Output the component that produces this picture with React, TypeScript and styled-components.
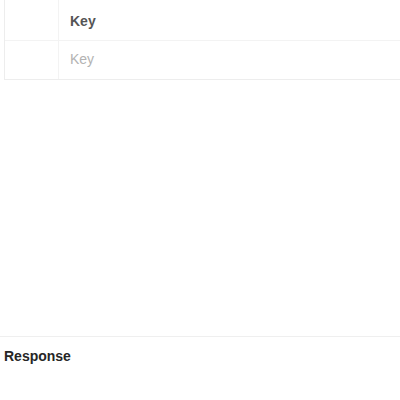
import React from "react";
import styled, { createGlobalStyle } from "styled-components";

const Global = createGlobalStyle`
  html, body { margin: 0; padding: 0; background: #fff; }
  body { font-family: "Liberation Sans", Arial, sans-serif; overflow: hidden; }
`;

const Page = styled.div`
  width: 400px;
  height: 400px;
  display: flex;
  flex-direction: column;
  overflow: hidden;
`;

const TableWrap = styled.div`
  padding-left: 4px;
  height: 336px;
  box-sizing: border-box;
`;

const Table = styled.div`
  width: 420px;
  border-left: 1px solid #ededed;
  border-bottom: 1px solid #ededed;
`;

const Row = styled.div<{ $head?: boolean }>`
  display: grid;
  grid-template-columns: 54px 1fr;
  height: ${(p) => (p.$head ? "41px" : "38px")};
  border-bottom: ${(p) => (p.$head ? "1px solid #f3f3f3" : "none")};
  box-sizing: border-box;
`;

const Cell = styled.div<{ $head?: boolean; $first?: boolean }>`
  display: flex;
  align-items: center;
  padding-left: ${(p) => (p.$first ? "0" : "11px")};
  padding-top: ${(p) => (p.$head ? "2px" : "0")};
  padding-bottom: ${(p) => (p.$head ? "0" : "3px")};
  border-right: ${(p) => (p.$first ? "1px solid #f3f3f3" : "none")};
  font-size: 14px;
  font-weight: ${(p) => (p.$head ? 700 : 400)};
  color: ${(p) => (p.$head ? "#555" : "#b3b3b3")};
`;

const Section = styled.div`
  border-top: 1px solid #efefef;
  padding: 11px 4px;
  font-size: 14px;
  font-weight: 700;
  color: #262626;
`;

export default function App() {
  return (
    <Page>
      <Global />
      <TableWrap>
        <Table>
          <Row $head>
            <Cell $first />
            <Cell $head>Key</Cell>
          </Row>
          <Row>
            <Cell $first />
            <Cell>Key</Cell>
          </Row>
        </Table>
      </TableWrap>
      <Section>Response</Section>
    </Page>
  );
}
